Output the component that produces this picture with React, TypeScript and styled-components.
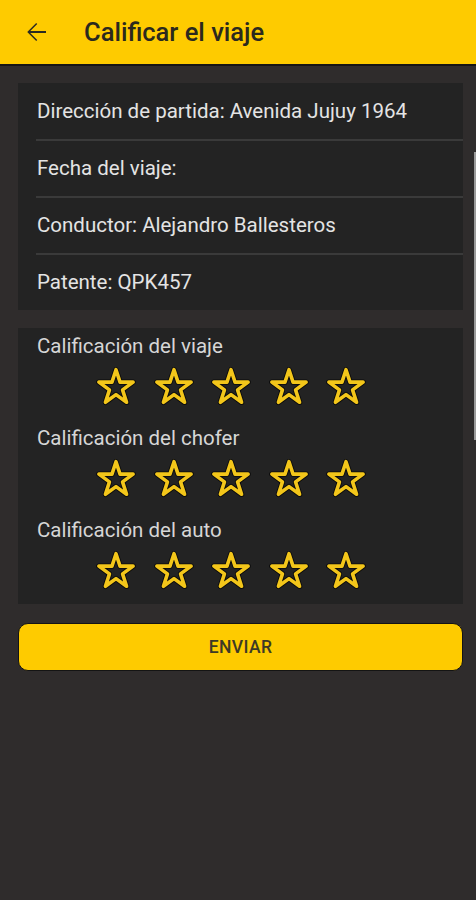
import React from 'react'
import styled, { createGlobalStyle } from 'styled-components'

const GlobalStyle = createGlobalStyle`
  html, body {
    margin: 0;
    padding: 0;
    background: #2f2c2c;
  }
  body {
    font-family: Roboto, "Noto Sans", sans-serif;
  }
`

const Screen = styled.div`
  position: relative;
  width: 476px;
  min-height: 900px;
  background: #2f2c2c;
  overflow: hidden;
`

const Header = styled.header`
  height: 64px;
  background: #fecb00;
  border-bottom: 2px solid #151515;
  display: flex;
  align-items: center;
  padding-left: 21px;
  gap: 33px;
`

const BackButton = styled.button`
  width: 30px;
  height: 30px;
  padding: 0;
  border: none;
  background: transparent;
  display: flex;
  align-items: center;
  justify-content: center;
  color: #2a2a22;
`

const Title = styled.h1`
  margin: 0;
  font-size: 25.5px;
  font-weight: 500;
  color: #2b291e;
`

const Content = styled.main`
  padding: 17px 13px 0 18px;
  display: flex;
  flex-direction: column;
  gap: 18px;
`

const Card = styled.section`
  background: #232323;
  display: flex;
  flex-direction: column;
`

const InfoRow = styled.div<{ $last?: boolean }>`
  height: 56px;
  flex-shrink: 0;
  display: flex;
  align-items: center;
  padding-left: 19px;
  font-size: 20.5px;
  color: #e4e4e4;
  position: relative;
  margin-bottom: ${p => (p.$last ? '0' : '1px')};
  &::after {
    content: '';
    display: ${p => (p.$last ? 'none' : 'block')};
    position: absolute;
    left: 18px;
    right: 0;
    bottom: -1.5px;
    height: 2px;
    background: #3a3a3a;
  }
`

const RatingCard = styled(Card)`
  padding: 7px 0 10px 19px;
`

const RatingLabel = styled.div`
  font-size: 20.5px;
  line-height: 22px;
  color: #d6d6d6;
`

const StarRow = styled.div`
  display: flex;
  gap: 9.5px;
  margin: 5px 0 17px 55px;
  &:last-child {
    margin-bottom: 0;
  }
`

const StarButton = styled.button`
  width: 48px;
  height: 48px;
  padding: 0;
  border: none;
  background: transparent;
  display: flex;
  align-items: center;
  justify-content: center;
`

const SendButton = styled.button`
  height: 48px;
  border: 1px solid #141414;
  border-radius: 10px;
  background: #fecb00;
  color: #3d3a26;
  font-family: Roboto, sans-serif;
  font-size: 17.5px;
  font-weight: 500;
  letter-spacing: 0.4px;
  margin-top: 1px;
`

const ScrollThumb = styled.div`
  position: absolute;
  right: 0;
  top: 152px;
  width: 2px;
  height: 288px;
  background: #9a9a9a;
`

const ArrowIcon = () => (
  <svg width="30" height="30" viewBox="0 0 24 24">
    <path d="M20 11.2H7.4l5.6-5.6-.85-.85L5 12l7.15 7.25.85-.85-5.6-5.6H20v-1.6z" fill="currentColor" />
  </svg>
)

const starPoints =
  '12,3.86 14.02,10.08 20.56,10.08 15.27,13.92 17.29,20.14 12,16.3 6.71,20.14 8.73,13.92 3.44,10.08 9.98,10.08'

const StarIcon = () => (
  <svg width="48" height="48" viewBox="0 0 24 24">
    <polygon points={starPoints} fill="none" stroke="#0b0b0b" strokeWidth="2.7" strokeLinejoin="round" />
    <polygon points={starPoints} fill="none" stroke="#f3c61a" strokeWidth="1.8" strokeLinejoin="round" />
  </svg>
)

const info = [
  'Dirección de partida: Avenida Jujuy 1964',
  'Fecha del viaje:',
  'Conductor: Alejandro Ballesteros',
  'Patente: QPK457',
]

const ratings = ['Calificación del viaje', 'Calificación del chofer', 'Calificación del auto']

export default function App() {
  return (
    <Screen>
      <GlobalStyle />
      <Header>
        <BackButton aria-label="Volver">
          <ArrowIcon />
        </BackButton>
        <Title>Calificar el viaje</Title>
      </Header>
      <Content>
        <Card>
          {info.map((text, i) => (
            <InfoRow key={text} $last={i === info.length - 1}>
              {text}
            </InfoRow>
          ))}
        </Card>
        <RatingCard>
          {ratings.map(label => (
            <React.Fragment key={label}>
              <RatingLabel>{label}</RatingLabel>
              <StarRow>
                {[1, 2, 3, 4, 5].map(n => (
                  <StarButton key={n} aria-label={`${n} estrellas`}>
                    <StarIcon />
                  </StarButton>
                ))}
              </StarRow>
            </React.Fragment>
          ))}
        </RatingCard>
        <SendButton>ENVIAR</SendButton>
      </Content>
      <ScrollThumb />
    </Screen>
  )
}
